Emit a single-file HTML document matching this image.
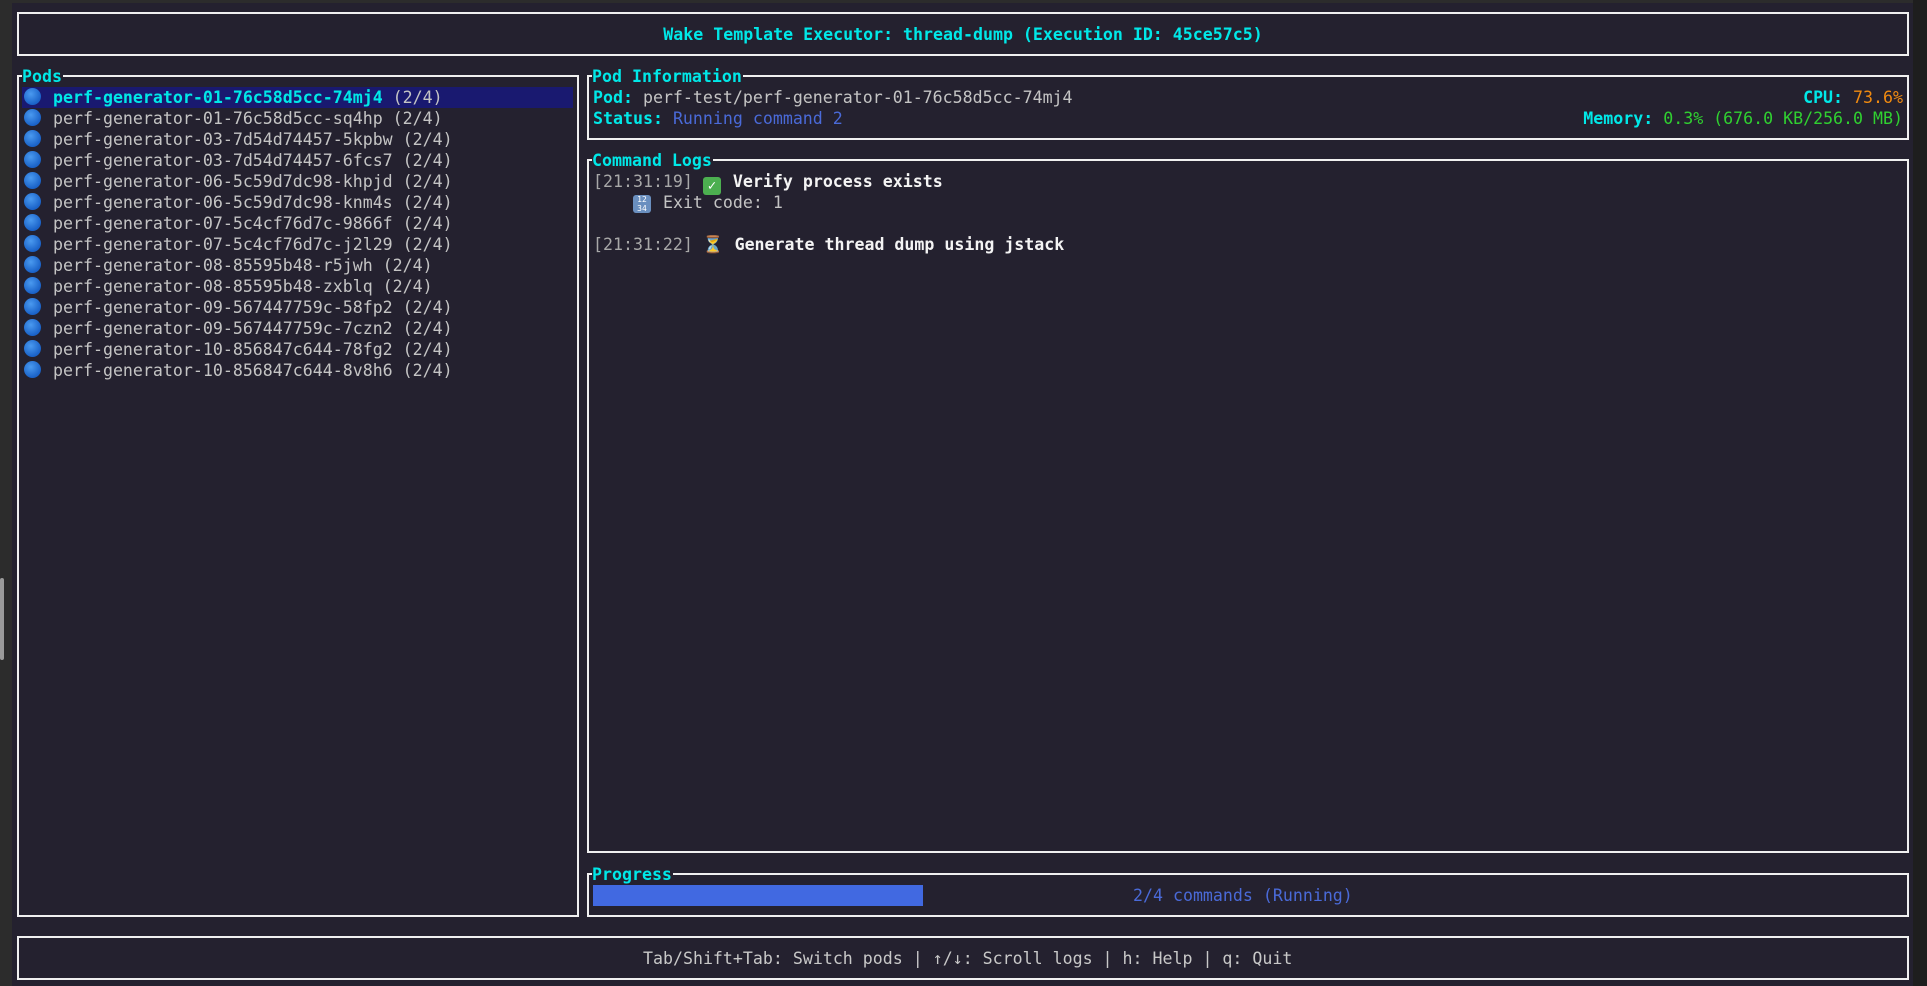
<!DOCTYPE html>
<html><head><meta charset="utf-8"><style>
html,body{margin:0;padding:0}
body{width:1927px;height:986px;background:#24212f;position:relative;overflow:hidden;font-family:"DejaVu Sans Mono","Liberation Mono",monospace;font-size:16.6px;color:#c4c4c4}
.box{position:absolute;border:2px solid #f0f0f0;box-sizing:border-box}
.t{position:absolute;white-space:pre;line-height:21px;height:21px}
.c{color:#00e8e8;font-weight:bold}
.ttl{background:#24212f;padding-right:1px}
.dot{display:inline-block;width:17px;height:17px;border-radius:50%;background:radial-gradient(circle at 40% 35%,#4a9af0,#1a62c8 70%);vertical-align:-2px;margin-right:12px;margin-left:2px}
.w{color:#f4f4f4;font-weight:bold}
.g{color:#a8a8a8}
</style></head><body>
<div style="position:absolute;left:0;top:0;width:12px;height:986px;background:#2c2c2c"></div>
<div style="position:absolute;left:0;top:0;width:1927px;height:3px;background:#2c2c2c"></div>
<div style="position:absolute;left:1913px;top:0;width:14px;height:986px;background:#1e1e1e"></div>
<div style="position:absolute;left:0;top:578px;width:4px;height:82px;background:#9a9a9a;border-radius:2px"></div>

<div class="box" style="left:17px;top:12px;width:1892px;height:44px"></div>
<div class="t c" style="left:17px;width:1892px;top:24px;text-align:center">Wake Template Executor: thread-dump (Execution ID: 45ce57c5)</div>

<div class="box" style="left:17px;top:75px;width:562px;height:842px"></div>
<div class="t c ttl" style="left:22px;top:66px">Pods</div>
<div style="position:absolute;left:22px;top:87px;width:551px;height:21px;background:#191970"></div>
<div class="t" style="left:22px;top:87px"><span class="dot"></span><span class="c">perf-generator-01-76c58d5cc-74mj4</span> (2/4)</div>
<div class="t" style="left:22px;top:108px"><span class="dot"></span>perf-generator-01-76c58d5cc-sq4hp (2/4)</div>
<div class="t" style="left:22px;top:129px"><span class="dot"></span>perf-generator-03-7d54d74457-5kpbw (2/4)</div>
<div class="t" style="left:22px;top:150px"><span class="dot"></span>perf-generator-03-7d54d74457-6fcs7 (2/4)</div>
<div class="t" style="left:22px;top:171px"><span class="dot"></span>perf-generator-06-5c59d7dc98-khpjd (2/4)</div>
<div class="t" style="left:22px;top:192px"><span class="dot"></span>perf-generator-06-5c59d7dc98-knm4s (2/4)</div>
<div class="t" style="left:22px;top:213px"><span class="dot"></span>perf-generator-07-5c4cf76d7c-9866f (2/4)</div>
<div class="t" style="left:22px;top:234px"><span class="dot"></span>perf-generator-07-5c4cf76d7c-j2l29 (2/4)</div>
<div class="t" style="left:22px;top:255px"><span class="dot"></span>perf-generator-08-85595b48-r5jwh (2/4)</div>
<div class="t" style="left:22px;top:276px"><span class="dot"></span>perf-generator-08-85595b48-zxblq (2/4)</div>
<div class="t" style="left:22px;top:297px"><span class="dot"></span>perf-generator-09-567447759c-58fp2 (2/4)</div>
<div class="t" style="left:22px;top:318px"><span class="dot"></span>perf-generator-09-567447759c-7czn2 (2/4)</div>
<div class="t" style="left:22px;top:339px"><span class="dot"></span>perf-generator-10-856847c644-78fg2 (2/4)</div>
<div class="t" style="left:22px;top:360px"><span class="dot"></span>perf-generator-10-856847c644-8v8h6 (2/4)</div>

<div class="box" style="left:587px;top:75px;width:1322px;height:65px"></div>
<div class="t c ttl" style="left:592px;top:66px">Pod Information</div>
<div class="t" style="left:593px;top:87px"><span class="c">Pod:</span> perf-test/perf-generator-01-76c58d5cc-74mj4</div>
<div class="t" style="left:593px;top:108px"><span class="c">Status:</span> <span style="color:#4a6ad8">Running command 2</span></div>
<div class="t" style="right:24px;top:87px"><span class="c">CPU:</span> <span style="color:#f08a10">73.6%</span></div>
<div class="t" style="right:24px;top:108px"><span class="c">Memory:</span> <span style="color:#30d030">0.3% (676.0 KB/256.0 MB)</span></div>

<div class="box" style="left:587px;top:159px;width:1322px;height:694px"></div>
<div class="t c ttl" style="left:592px;top:150px">Command Logs</div>
<div class="t" style="left:593px;top:171px"><span class="g">[21:31:19]</span> <span style="display:inline-block;width:18px;height:18px;background:#4caf50;border-radius:3px;color:#fff;font-size:14px;line-height:18px;text-align:center;vertical-align:-3px;margin-right:2px">✓</span> <span class="w">Verify process exists</span></div>
<div class="t" style="left:593px;top:192px">    <span style="display:inline-block;width:18px;height:18px;background:#6a8fbf;border-radius:3px;color:#fff;font-size:8px;line-height:9px;text-align:center;vertical-align:-3px;margin-right:2px">12<br>34</span> Exit code: 1</div>
<div class="t" style="left:593px;top:234px"><span class="g">[21:31:22]</span> <span style="color:#e8a030;margin-right:1px">⏳</span> <span class="w">Generate thread dump using jstack</span></div>

<div class="box" style="left:587px;top:873px;width:1322px;height:44px"></div>
<div class="t c ttl" style="left:592px;top:864px">Progress</div>
<div style="position:absolute;left:593px;top:885px;width:330px;height:21px;background:#4169e1"></div>
<div class="t" style="left:1133px;top:885px;color:#4a6ad8">2/4 commands (Running)</div>

<div class="box" style="left:17px;top:936px;width:1892px;height:44px"></div>
<div class="t" style="left:643px;top:948px;color:#c8c8c8">Tab/Shift+Tab: Switch pods | ↑/↓: Scroll logs | h: Help | q: Quit</div>
</body></html>
